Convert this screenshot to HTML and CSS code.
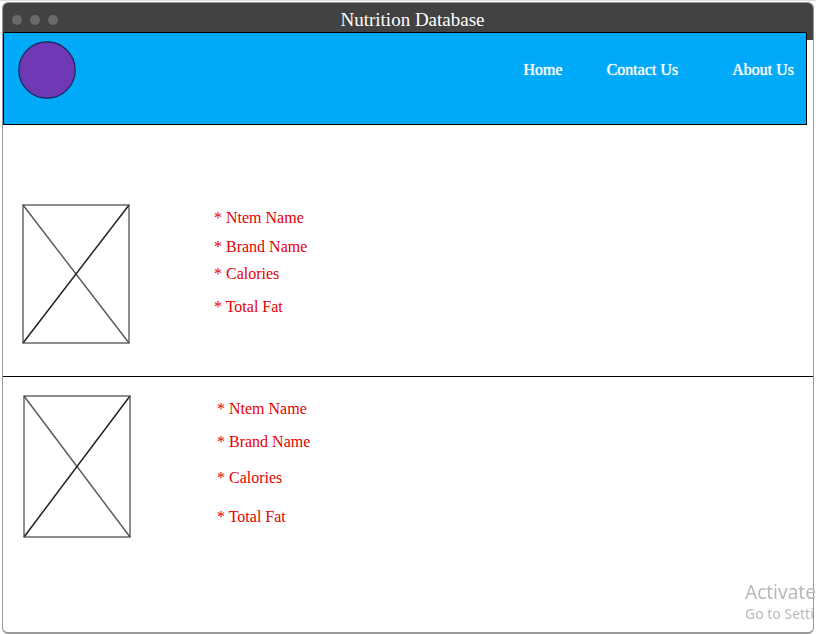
FILE: index.html
```html
<!DOCTYPE html>
<html lang="en">
<head>
<meta charset="utf-8">
<title>Nutrition Database</title>
<link rel="stylesheet" href="styles.css">
</head>
<body>
<div class="window">
  <div class="titlebar">
    <div class="dots"><span class="dot"></span><span class="dot"></span><span class="dot"></span></div>
    <h1 class="title">Nutrition Database</h1>
  </div>
  <header class="header">
    <svg class="logo" viewBox="0 0 58 58" aria-hidden="true"><circle cx="29" cy="29" r="28.2" fill="#6f39b6" stroke="#1c2450" stroke-width="1.2"/></svg>
    <nav class="nav">
      <a href="#home">Home</a>
      <a href="#contact">Contact Us</a>
      <a href="#about">About Us</a>
    </nav>
  </header>
  <main>
    <section class="item item-first">
      <svg class="photo" viewBox="0 0 108 140" preserveAspectRatio="none" aria-hidden="true">
        <path d="M1 1L107 139" stroke="#555" stroke-width="1.4"/>
        <path d="M1 139L107 1" stroke="#222" stroke-width="1.5"/>
        <rect x="1" y="1" width="106" height="138" fill="none" stroke="#444" stroke-width="1.2"/>
      </svg>
      <ul class="facts">
        <li>* Ntem Name</li>
        <li>* Brand Name</li>
        <li>* Calories</li>
        <li>* Total Fat</li>
      </ul>
    </section>
    <section class="item item-second">
      <svg class="photo" viewBox="0 0 108 143" preserveAspectRatio="none" aria-hidden="true">
        <path d="M1 1L107 142" stroke="#555" stroke-width="1.4"/>
        <path d="M1 142L107 1" stroke="#222" stroke-width="1.5"/>
        <rect x="1" y="1" width="106" height="141" fill="none" stroke="#444" stroke-width="1.2"/>
      </svg>
      <ul class="facts">
        <li>* Ntem Name</li>
        <li>* Brand Name</li>
        <li>* Calories</li>
        <li>* Total Fat</li>
      </ul>
    </section>
  </main>
</div>
<aside class="notice">
  <p class="notice-title">Activate</p>
  <p class="notice-text">Go to Setti</p>
</aside>
</body>
</html>
```

FILE: styles.css
```css
* {
  box-sizing: border-box;
}

body {
  margin: 0;
  min-height: 100vh;
  padding: 1px 2px 0;
  display: flex;
  border-top: 1px solid #d9dce4;
  background: #fff;
  color: #e60000;
  font: 16px/20px "Liberation Serif", serif;
  overflow: hidden;
}

.window {
  flex: 1;
  border: solid #999;
  border-width: 1px 1px 2px;
  border-radius: 6px;
}

.titlebar {
  display: grid;
  grid-template-columns: 1fr auto 1fr;
  align-items: center;
  height: 37px;
  padding: 0 0 4px 9px;
  border-radius: 5px 5px 0 0;
  background: #424242;
}

.dots {
  display: flex;
  gap: 8px;
}

.dot {
  width: 10px;
  height: 10px;
  border-radius: 50%;
  background: #6a6a6a;
}

.title {
  margin: 0;
  color: #fff;
  font-size: 19px;
  font-weight: 400;
  line-height: 20px;
}

.header {
  display: flex;
  justify-content: space-between;
  align-items: flex-start;
  height: 93px;
  margin: -8px 6px 0 0;
  padding: 8px 12px 0 14px;
  border: 1px solid #000;
  background: #00aaf8;
}

.logo {
  width: 58px;
  height: 58px;
}

.nav {
  display: flex;
  gap: 44px;
  padding-top: 19px;
}

.nav a {
  color: #fff;
  text-decoration: none;
  text-shadow: 0 0 1px #fff;
}

.nav a + a + a {
  margin-left: 10px;
}

.item {
  display: flex;
  align-items: flex-start;
}

.item-first {
  height: 252px;
  padding: 79px 19px 0;
  gap: 84px;
  border-bottom: 1px solid #000;
}

.item-second {
  padding: 18px 20px 0;
  gap: 86px;
}

.photo {
  width: 108px;
  height: 140px;
}

.item-second .photo {
  height: 143px;
}

.facts {
  display: grid;
  margin: 0;
  padding: 4px 0 0;
  list-style: none;
}

.item-first .facts {
  grid-template-rows: 29px 27px 33px 20px;
}

.item-second .facts {
  grid-template-rows: 33px 36px 39px 20px;
}

.notice {
  position: fixed;
  right: 0;
  bottom: 10px;
  width: 71px;
  overflow: hidden;
  color: #b9b9b9;
  font-family: "Noto Sans", sans-serif;
  white-space: nowrap;
}

.notice p {
  margin: 0;
}

.notice-title {
  font-size: 19px;
  line-height: 24px;
}

.notice-text {
  font-size: 14px;
  line-height: 20px;
}
```
